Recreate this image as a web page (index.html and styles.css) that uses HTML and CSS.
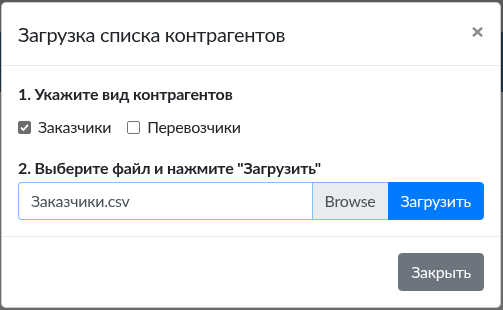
FILE: index.html
```html
<!DOCTYPE html>
<html lang="ru">
<head>
<meta charset="utf-8">
<title>Загрузка списка контрагентов</title>
<link rel="stylesheet" href="styles.css">
</head>
<body>
<div class="page">
  <div class="page-top"></div>
  <div class="page-nav"></div>
  <div class="page-content">
    <div class="page-row"><span>020</span><span>12+567-3+ г. Саратов, ул. Некрасова, д. 30</span></div>
  </div>
</div>
<div class="backdrop">
  <div class="modal">
    <div class="modal-header">
      <h5 class="modal-title">Загрузка списка контрагентов</h5>
      <button class="close" type="button" aria-label="Close">
        <svg width="11" height="10" viewBox="0 0 11 10"><path d="M1 0.8 L10 9.2 M10 0.8 L1 9.2" stroke="#8a8a8a" stroke-width="2.4" fill="none"/></svg>
      </button>
    </div>
    <div class="modal-body">
      <div class="step-title">1. Укажите вид контрагентов</div>
      <div class="checks">
        <label class="check"><span class="box checked"><svg width="13" height="13" viewBox="0 0 13 13"><path d="M3 6.6 L5.4 9 L10 3.8" stroke="#fff" stroke-width="1.8" fill="none"/></svg></span>Заказчики</label>
        <label class="check"><span class="box"></span>Перевозчики</label>
      </div>
      <div class="step-title step-two">2. Выберите файл и нажмите "Загрузить"</div>
      <div class="input-group">
        <div class="file-label">
          <span class="file-name">Заказчики.csv</span>
          <span class="browse">Browse</span>
        </div>
        <button class="btn btn-primary" type="button">Загрузить</button>
      </div>
    </div>
    <div class="modal-footer">
      <button class="btn btn-secondary" type="button">Закрыть</button>
    </div>
  </div>
</div>
</body>
</html>
```
FILE: styles.css
```css
* { box-sizing: border-box; }
html, body { margin: 0; padding: 0; }
body {
  width: 503px;
  height: 310px;
  overflow: hidden;
  font-family: Lato, "Open Sans", sans-serif;
  font-size: 16px;
  line-height: 24px;
  letter-spacing: -0.25px;
  color: #212529;
  background: #d0d0d0;
}
.page-top { height: 32px; background: #b2b2b2; }
.page-nav { height: 60px; background: #3a5d78; }
.page-content { padding-top: 213px; background: #d6d6d6; }
.page-row { display: flex; gap: 40px; font-size: 14px; line-height: 20px; color: #000; }

.backdrop {
  position: fixed;
  inset: 0;
  background: rgba(0, 0, 0, 0.5);
  padding: 2px 2px 0 1px;
}
.modal {
  width: 500px;
  background: #fff;
  border: 1px solid rgba(0, 0, 0, 0.2);
  border-radius: 5px;
}
.modal-header {
  display: flex;
  align-items: flex-start;
  justify-content: space-between;
  padding: 16px;
  border-bottom: 1px solid #e9ecef;
}
.modal-title {
  margin: 0;
  font-size: 20px;
  font-weight: 400;
  line-height: 30px;
  letter-spacing: -0.35px;
}
.close {
  border: 0;
  background: transparent;
  padding: 0;
  margin: 8px 1px 0 0;
  width: 11px;
  height: 10px;
  display: flex;
  cursor: pointer;
}
.modal-body { padding: 16px; }
.step-title { font-weight: 700; letter-spacing: -0.15px; }
.checks { display: flex; margin-top: 9px; }
.check { display: flex; align-items: center; margin-right: 16px; }
.box {
  width: 13px;
  height: 13px;
  border: 1px solid #767676;
  border-radius: 2px;
  margin-right: 7px;
  display: flex;
}
.box.checked { background: #6d6d6d; border-color: #6d6d6d; }
.box.checked svg { margin: -1px; }
.step-two { margin-top: 17px; }
.input-group { display: flex; margin-top: 2px; height: 38px; }
.file-label {
  flex: 1;
  display: flex;
  border: 1px solid #80bdff;
  border-right: 0;
  border-radius: 4px 0 0 4px;
  overflow: hidden;
  color: #495057;
}
.file-name { flex: 1; padding: 6px 12px; }
.browse {
  background: #e9ecef;
  border-left: 1px solid #80bdff;
  padding: 6px 12px;
}
.btn {
  font-family: inherit;
  font-size: 16px;
  line-height: 24px;
  letter-spacing: -0.25px;
  padding: 6px 12px;
  border: 1px solid transparent;
  color: #fff;
}
.btn-primary {
  background: #007bff;
  border-color: #007bff;
  border-radius: 0 4px 4px 0;
}
.modal-footer {
  display: flex;
  justify-content: flex-end;
  padding: 16px;
  border-top: 1px solid #e9ecef;
}
.btn-secondary {
  background: #6c757d;
  border-color: #6c757d;
  border-radius: 4px;
}
```
